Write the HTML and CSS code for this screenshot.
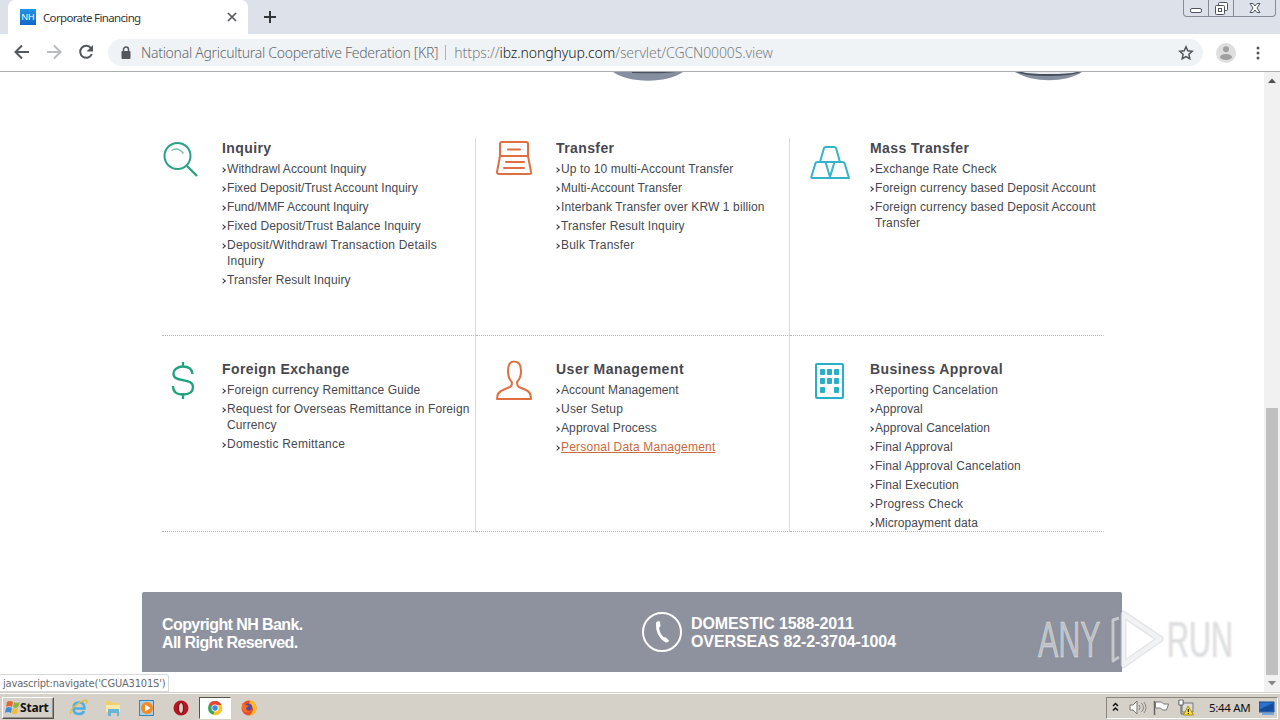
FILE: index.html
```html
<!DOCTYPE html>
<html lang="en">
<head>
<meta charset="utf-8">
<title>Corporate Financing</title>
<link rel="stylesheet" href="styles.css">
</head>
<body>
<header class="tabstrip">
  <div class="tab">
    <span class="favicon">NH</span><span class="tab-title">Corporate Financing</span>
    <svg class="tab-close" width="10" height="10" viewBox="0 0 10 10"><path d="M1 1l8 8M9 1l-8 8" stroke="#55585c" stroke-width="1.7"/></svg>
  </div>
  <svg class="newtab" width="12" height="12" viewBox="0 0 12 12"><path d="M6 0v12M0 6h12" stroke="#333639" stroke-width="2"/></svg>
  <div class="wincontrols">
    <span><svg width="12" height="16" viewBox="0 0 12 16"><rect x=".5" y="8.5" width="11" height="4" rx="1.5" fill="#fff" stroke="#4c5260"/></svg></span>
    <span><svg width="14" height="16" viewBox="0 0 14 16"><rect x="4.500" y="2.500" width="9" height="8" rx="1" fill="#fff" stroke="#4c5260"/><rect x="1.500" y="5.500" width="9" height="9" rx="1" fill="#fff" stroke="#4c5260"/><rect x="4.500" y="8.500" width="3" height="3" fill="#fff" stroke="#4c5260"/></svg></span>
    <span><svg width="12" height="16" viewBox="0 0 12 16"><path d="M1 3.500h3l2 2.500 2-2.500h3L8 8l3 4.500H8L6 10l-2 2.500H1L4 8z" fill="#fff" stroke="#4c5260"/></svg></span>
  </div>
</header>
<nav class="toolbar">
  <svg class="nav-icons" width="108" height="37" viewBox="0 0 108 37" fill="none" stroke-width="2"><path d="M29 18H16M22 11.500L15.500 18l6.500 6.500" stroke="#54575b"/><path d="M47 18h13M54 11.500l6.500 6.500-6.500 6.500" stroke="#b9bbbd"/><path d="M91 14.200A6 6 0 1 0 91.800 20" stroke="#54575b"/><path d="M93 11v6.500h-6.500z" fill="#54575b"/></svg>
  <div class="omnibox">
    <svg class="lock" width="10" height="13" viewBox="0 0 10 13"><rect x=".5" y="5" width="9" height="8" rx="1" fill="#54585d"/><path d="M2.500 6V3.500a2.500 2.500 0 0 1 5 0V6" fill="none" stroke="#54585d" stroke-width="1.500"/></svg>
    <span class="org">National Agricultural Cooperative Federation [KR]</span><span class="sep"></span><span class="url"><span class="scheme">https://</span><span class="host">ibz.nonghyup.com</span><span class="path">/servlet/CGCN0000S.view</span></span>
    <svg class="star" width="16" height="16" viewBox="0 0 16 16"><path d="M8 1.800l1.800 4 4.400.5-3.300 3 .9 4.400L8 11.500l-3.800 2.200.9-4.400-3.300-3 4.400-.5z" fill="none" stroke="#4f5358" stroke-width="1.500"/></svg>
  </div>
  <svg class="avatar" width="20" height="20" viewBox="0 0 20 20"><circle cx="10" cy="10" r="10" fill="#dedede"/><circle cx="10" cy="6.300" r="3" fill="#a0a0a0"/><ellipse cx="10" cy="14" rx="6" ry="3" fill="#a0a0a0"/></svg>
  <svg class="menu-dots" width="4" height="16" viewBox="0 0 4 16" fill="#55585c"><circle cx="2" cy="3" r="1.500"/><circle cx="2" cy="8" r="1.500"/><circle cx="2" cy="13" r="1.500"/></svg>
</nav>
<div class="viewport">
  <main class="page">
    <div class="banner-bottom">
      <svg width="80" height="10" viewBox="0 0 80 10"><path d="M6 0h70C60 11.500 22 11.500 6 0z" fill="#858f9f"/><path d="M25 0h44q-14 2-44 1z" fill="#49515f"/></svg>
      <svg width="80" height="10" viewBox="0 0 80 10"><path d="M7 0h67C58 11 24 11 7 0z" fill="#858f9f"/><path d="M9 0h64q-10 4-32 4Q18 4 9 0z" fill="#454e5e"/><path d="M14 0h55Q61 2 41 2 21 2 14 0z" fill="#e7e9ec"/></svg>
    </div>
    <div class="services">
      <section class="cell c1">
        <svg class="icon" width="42" height="42" viewBox="0 0 42 42" fill="none" stroke="#2ba283"><circle cx="14.500" cy="17" r="13" stroke-width="2"/><path d="M8.500 11.500q6-4 12 3" stroke-width="1.500" stroke="#75c0ab"/><path d="M24 27l10 10" stroke-width="2.400"/></svg>
        <div><h2>Inquiry</h2><ul><li class="tight">Withdrawl Account Inquiry</li><li class="tight">Fixed Deposit/Trust Account Inquiry</li><li class="tighter">Fund/MMF Account Inquiry</li><li>Fixed Deposit/Trust Balance Inquiry</li><li class="wide">Deposit/Withdrawl Transaction Details<br>Inquiry</li><li>Transfer Result Inquiry</li></ul></div>
      </section>
      <section class="cell c2">
        <svg class="icon" width="42" height="42" viewBox="0 0 42 42" fill="none" stroke="#dd6f43" stroke-width="2" stroke-linejoin="round" stroke-linecap="round"><path d="M4 17V5q0-2 2-2h24q2 0 2 2v12M4 17L1 33q0 2 2 2h30q3 0 2-2l-3-16H4M12 10.500h12M10 23h18M8 29h20"/></svg>
        <div><h2>Transfer</h2><ul><li>Up to 10 multi-Account Transfer</li><li class="tight">Multi-Account Transfer</li><li>Interbank Transfer over KRW 1 billion</li><li>Transfer Result Inquiry</li><li class="wide">Bulk Transfer</li></ul></div>
      </section>
      <section class="cell c3">
        <svg class="icon" width="42" height="42" viewBox="0 0 42 42" fill="none" stroke="#35b3ca" stroke-width="2" stroke-linejoin="round"><path d="M10 23l4-14q.5-1 2-1h8q1.500 0 2 1l4 14M1 39l4.500-15q.5-1 2-1h25q1.500 0 2 1L39 39H1M15.500 23L20 38l4.500-15"/></svg>
        <div><h2>Mass Transfer</h2><ul><li>Exchange Rate Check</li><li>Foreign currency based Deposit Account</li><li>Foreign currency based Deposit Account<br>Transfer</li></ul></div>
      </section>
      <section class="cell c1">
        <svg class="icon" width="42" height="42" viewBox="0 0 42 42" fill="none" stroke="#20a180" stroke-width="2.300"><path d="M20 2v5M20 33v6M29.500 14C29 8.500 25 6.500 20 6.500c-5.500 0-9.500 3-9.500 7.500C10.500 23 30 17 30 27c0 5-4 7.500-10 7.500S10 32 10 26"/></svg>
        <div><h2>Foreign Exchange</h2><ul><li>Foreign currency Remittance Guide</li><li>Request for Overseas Remittance in Foreign<br>Currency</li><li class="wide">Domestic Remittance</li></ul></div>
      </section>
      <section class="cell c2">
        <svg class="icon" width="42" height="42" viewBox="0 0 42 42" fill="none" stroke="#dd6f43" stroke-width="2" stroke-linejoin="round"><path d="M1 39q0-7 6-9l7-3q2-1 2-4.500-4-4.500-4-11.500 0-10 6.500-9.500Q25 1.500 25 11q0 7-4 11 0 4 2 5l7 3q5 2 5 9z"/></svg>
        <div><h2 class="loose">User Management</h2><ul><li class="tight">Account Management</li><li class="wide">User Setup</li><li>Approval Process</li><li class="wide"><a>Personal Data Management</a></li></ul></div>
      </section>
      <section class="cell c3">
        <svg class="icon" width="42" height="42" viewBox="0 0 42 42"><rect x="6" y="4" width="27" height="34" rx="1" fill="none" stroke="#28aec6" stroke-width="2"/><g fill="#28aec6"><rect x="10" y="9" width="5" height="6" rx="1"/><rect x="17" y="9" width="5" height="6" rx="1"/><rect x="24" y="9" width="5" height="6" rx="1"/><rect x="10" y="18" width="5" height="6" rx="1"/><rect x="17" y="18" width="5" height="6" rx="1"/><rect x="24" y="18" width="5" height="6" rx="1"/><rect x="10" y="27" width="5" height="6" rx="1"/><rect x="24" y="27" width="5" height="6" rx="1"/></g></svg>
        <div><h2>Business Approval</h2><ul><li class="wide">Reporting Cancelation</li><li class="tight">Approval</li><li class="tight">Approval Cancelation</li><li>Final Approval</li><li>Final Approval Cancelation</li><li>Final Execution</li><li class="wide">Progress Check</li><li class="tight">Micropayment data</li></ul></div>
      </section>
    </div>
    <footer class="footer">
      <p class="copy">Copyright NH Bank.<br>All Right Reserved.</p>
      <svg width="40" height="40" viewBox="0 0 40 40"><circle cx="20" cy="20" r="19" fill="none" stroke="#fff" stroke-width="2"/><path d="M14 10.500q2-2 4-1l.5 4.500-1.500 2q1 6 4.500 9l2.500.500 3 3q-.5 2.500-3.500 2Q13 24 14 10.500z" fill="#fff"/></svg>
      <p class="phones">DOMESTIC 1588-2011<br>OVERSEAS 82-2-3704-1004</p>
    </footer>
  </main>
  <aside class="scrollbar">
    <svg width="16" height="17" viewBox="0 0 16 17"><path d="M4 11l4-4.500 4 4.500z" fill="#505050"/></svg>
    <div class="thumb"></div>
    <svg width="16" height="17" viewBox="0 0 16 17"><path d="M4 6l4 4.500L12 6z" fill="#858585"/></svg>
  </aside>
  <div class="status">javascript:navigate('CGUA3101S')</div>
  <div class="watermark">
    <span class="wm-any">ANY</span>
    <svg width="58" height="64" viewBox="0 0 58 64" fill="none" stroke-linejoin="round"><g stroke="#7e838e" stroke-opacity=".22" stroke-width="7"><path d="M15 6l37 25-37 26z"/><path d="M11 10L5 12v41l6-4" stroke-width="5"/></g><g stroke="#fff" stroke-opacity=".5" stroke-width="4.500"><path d="M15 6l37 25-37 26z"/><path d="M11 10L5 12v41l6-4" stroke-width="3"/></g></svg>
    <span class="wm-run">RUN</span>
  </div>
</div>
<div class="taskbar">
  <div class="start"><svg width="16" height="16" viewBox="0 0 16 16"><path d="M3 2q3-2 6 0L8 7Q5 5 2 7z" fill="#e66332"/><path d="M10 2q3 2 6 0l-2 5q-3 2-5 0z" fill="#86b63c"/><path d="M2 8q3-2 6 0l-1 5q-3-2-6 0z" fill="#3f8bd4"/><path d="M9 8q3 2 5 0l-1 5q-3 2-5 0z" fill="#f4ba32"/></svg><b>Start</b></div>
  <div class="launchers">
    <svg width="20" height="20" viewBox="0 0 20 20" fill="none"><path d="M4.500 10.500h11q0-6-5.500-6t-5.500 6q0 5.500 5.500 5.500 4 0 5-3" stroke="#4fb0e4" stroke-width="2.600"/><path d="M2 16q-2-3 4-8t11-6q2 1 0 4" stroke="#e4bd43" stroke-width="1.300"/></svg>
    <svg width="20" height="20" viewBox="0 0 20 20"><path d="M3 3h6l1 2h7v10H3z" fill="#edd072"/><path d="M3 7h14v7H3z" fill="#f9e9a7"/><path d="M5 11h11v7h-2v-3H8v3H5z" fill="#6cb3d7"/></svg>
    <svg width="20" height="20" viewBox="0 0 20 20"><rect x="2.500" y="2.500" width="14" height="15" fill="#a6d0ec" stroke="#3985b8"/><circle cx="10" cy="10" r="6" fill="#f18a25"/><path d="M8 6.500l5.500 3.500L8 13.500z" fill="#fff"/></svg>
    <svg width="20" height="20" viewBox="0 0 20 20"><circle cx="10" cy="10" r="7.500" fill="#b51520"/><ellipse cx="10" cy="10" rx="2.500" ry="5.500" fill="#d6cfc8" stroke="#7b080d"/></svg>
    <span class="active"><svg width="18" height="18" viewBox="0 0 18 18"><circle cx="9" cy="9" r="7" fill="#37a853"/><path d="M9 9L3 5.400A7 7 0 0 1 15.400 6H9z" fill="#e84435"/><path d="M9 9l-1.500 7A7 7 0 0 0 15.400 6H9z" fill="#f8c52c"/><circle cx="9" cy="9" r="3.500" fill="#fff"/><circle cx="9" cy="9" r="2.700" fill="#4386e8"/></svg></span>
    <svg width="20" height="20" viewBox="0 0 20 20"><circle cx="10" cy="10" r="7.500" fill="#ed4b28"/><path d="M11 2q7 3 6.500 9T10 17.500Q16 13 13 8l-3-2z" fill="#fdbc22"/><circle cx="9.500" cy="9" r="3.500" fill="#5547a7"/><path d="M3 5l4 2 3 1-3 2q1 4 5 3-6 4-9-2z" fill="#f36c27"/></svg>
  </div>
  <div class="tray">
    <svg width="102" height="20" viewBox="0 0 102 20" fill="none"><path d="M6 8l2.500-2.500L11 8M6 12.500L8.500 10l2.500 2.500" stroke="#111" stroke-width="1.500"/><path d="M23 7h3l4-4v13l-4-4h-3z" fill="#f6f6f6" stroke="#777"/><path d="M32 7q2 3 0 5M34.500 5q4 5 0 9M37 4q4 6 0 11" stroke="#888"/><path d="M47.500 17V3" stroke="#666" stroke-width="1.500"/><path d="M48.500 4h6l2 2h5l-2 6h-4l-2-2h-5z" fill="#fff" stroke="#777"/><path d="M75 5h11v9H75z" fill="#dcdcdc" stroke="#777"/><path d="M72 2v5h4V2M74 7v9h4" stroke="#666"/><path d="M72 2h4v5h-4z" fill="#fff" stroke="#777"/><path d="M81 8l5.500 9h-10z" fill="#ffdf32" stroke="#a99010"/><path d="M81.300 11v3M81.300 15v1" stroke="#222" stroke-width="1.200"/></svg>
    <span class="clock">5:44 AM</span>
    <svg class="monitor" width="16" height="16" viewBox="0 0 16 16"><path d="M0 2h15v10H0z" fill="#2b72cf" stroke="#174b91"/><path d="M1 9L14 3v8H1z" fill="#154b9d"/><path d="M3 13h12v2H3z" fill="#74a8dc"/></svg>
  </div>
</div>
</body>
</html>
```

FILE: styles.css
```css
* { box-sizing: border-box; }
body { margin: 0; width: 1280px; height: 720px; display: flex; flex-direction: column; overflow: hidden; background: #fff; font-family: "Liberation Sans", sans-serif; color: #484850; }
svg { display: block; flex: none; }
p, h2, ul { margin: 0; padding: 0; }
.tabstrip { height: 34px; flex: none; background: #dde1e9; display: flex; align-items: flex-start; }
.tab { margin-left: 8px; width: 240px; height: 34px; padding: 0 11px 0 12px; background: #fff; border-radius: 7px 7px 0 0; display: flex; align-items: center; font: 12px "Noto Sans", sans-serif; color: #35373b; }
.favicon { width: 16px; height: 16px; margin-right: 7px; background: linear-gradient(#2196e8, #1266c5); color: #fff; font: 9px/16px "Liberation Sans", sans-serif; text-align: center; }
.tab-title { font-size: 11.5px; letter-spacing: -.65px; white-space: nowrap; }
.tab-close { margin-left: auto; }
.newtab { margin: 11px 0 0 16px; }
.wincontrols { margin-left: auto; margin-right: 4px; width: 93px; height: 17px; border: 1px solid #858b97; border-top: 0; border-radius: 0 0 4px 4px; display: grid; grid-template-columns: 25px 25px 1fr; }
.wincontrols span { display: flex; justify-content: center; border-right: 1px solid #858b97; }
.wincontrols span:last-child { border-right: 0; }
.toolbar { height: 38px; flex: none; display: flex; align-items: center; border-bottom: 1px solid #acaead; }
.omnibox { width: 1095px; height: 27px; border-radius: 14px; background: #f0f3f6; padding: 0 9px 0 13px; display: flex; align-items: center; font: 14px "Noto Sans", sans-serif; font-weight: 300; color: #64686d; white-space: nowrap; }
.lock { margin-right: 10px; }
.org { letter-spacing: -.28px; }
.sep { width: 1px; height: 15px; background: #adb0b4; margin: 0 8px 0 7px; }
.url { letter-spacing: -.1px; }
.host { color: #191b1f; }
.path, .scheme { color: #7a7e83; }
.star { margin-left: auto; }
.avatar { margin-left: 13px; }
.menu-dots { margin-left: 20px; }
.viewport { height: 620px; flex: none; position: relative; display: flex; overflow: hidden; }
.page { width: 1264px; flex: none; }
.banner-bottom { height: 66px; display: flex; gap: 321px; padding-left: 607px; }
.services { margin-left: 162px; width: 942px; display: grid; grid-template-columns: repeat(3, 314px); grid-template-rows: 198px 196px; }
.cell { display: flex; align-items: flex-start; border-right: 1px solid #dadadf; border-bottom: 1px dotted #b5b5b9; padding-top: 2px; white-space: nowrap; }
.cell:nth-child(n+4) { padding-top: 25px; }
.c3 { border-right-color: transparent; }
.icon { margin-left: 1px; margin-right: 17px; }
.c2 .icon, .c3 .icon { margin-left: 20px; margin-right: 18px; }
.cell:nth-child(-n+3) .icon { margin-top: -1px; }
.cell:nth-child(n+4) .icon { margin-top: -1px; }
h2 { font-size: 14px; line-height: 16px; font-weight: bold; letter-spacing: .4px; }
h2.loose { letter-spacing: .5px; }
ul { list-style: none; padding-top: 5px; }
li { font-size: 12px; line-height: 16px; margin-bottom: 3px; padding-left: 5px; letter-spacing: .12px; position: relative; }
li.tight { letter-spacing: .05px; }
li.tighter { letter-spacing: -.08px; }
li.wide { letter-spacing: .21px; }
li:last-child { margin-bottom: 0; }
li::before { content: ""; position: absolute; left: -1px; top: 7px; width: 3px; height: 3px; border: solid #383840; border-width: 1.2px 1.2px 0 0; transform: rotate(45deg); }
li a { color: #cc683c; text-decoration: underline; }
.footer { margin: 60px 0 0 142px; width: 980px; height: 80px; background: #8d929e; border-radius: 2px 2px 0 0; display: flex; align-items: center; padding-left: 20px; color: #fff; font-size: 16px; line-height: 18px; font-weight: bold; white-space: nowrap; }
.copy { width: 480px; letter-spacing: -.58px; padding-top: 3px; }
.phones { margin-left: 9px; padding-top: 2px; letter-spacing: -.1px; }
.scrollbar { width: 16px; background: #f1f1f1; display: flex; flex-direction: column; }
.thumb { margin: 319px 2px 0; height: 268px; background: #c0c0c0; }
.status { position: absolute; left: 0; bottom: 0; width: 169px; height: 18px; border: 1px solid #d8d8d8; border-left: 0; border-radius: 0 3px 0 0; background: #fff; padding-left: 3px; color: #67696d; font: 11px/17px "DejaVu Sans Condensed", "DejaVu Sans", sans-serif; white-space: nowrap; letter-spacing: -.18px; }
.watermark { position: absolute; left: 1038px; top: 536px; display: flex; align-items: center; font: 50px/64px "Liberation Sans", sans-serif; color: rgba(255,255,255,.5); text-shadow: 0 0 2px rgba(100,105,115,.45); }
.watermark span { display: block; width: 64px; transform: scaleX(.61); transform-origin: left; -webkit-text-stroke: 1px rgba(255,255,255,.4); }
.watermark svg { margin-left: 6px; }
.watermark .wm-run { margin-left: 1px; }
.taskbar { height: 28px; flex: none; background: #d5d0c8; border-top: 1px solid #d5d0c8; box-shadow: inset 0 1px #fff; display: flex; align-items: center; padding-top: 2px; }
.start { margin-left: 2px; width: 52px; height: 22px; border: 1px solid; border-color: #fff #55524e #55524e #fff; box-shadow: inset -1px -1px #96928b; display: flex; align-items: center; padding-left: 1px; font: 12px "Noto Sans", sans-serif; color: #111; }
.start b { letter-spacing: -.2px; }
.launchers { display: flex; margin-left: 15px; align-items: center; gap: 14px; }
.active { width: 32px; height: 22px; margin: 0 -6px; border: 1px solid; border-color: #55524e #fff #fff #55524e; background: #fff; display: flex; align-items: center; justify-content: center; }
.tray { margin-left: auto; margin-right: 2px; width: 172px; height: 22px; border: 1px solid; border-color: #8a867f #fff #fff #8a867f; display: flex; align-items: center; color: #111; }
.clock { white-space: nowrap; font: 11.5px "Noto Sans", sans-serif; letter-spacing: -.3px; }
.monitor { margin-left: auto; margin-right: 2px; }
```
